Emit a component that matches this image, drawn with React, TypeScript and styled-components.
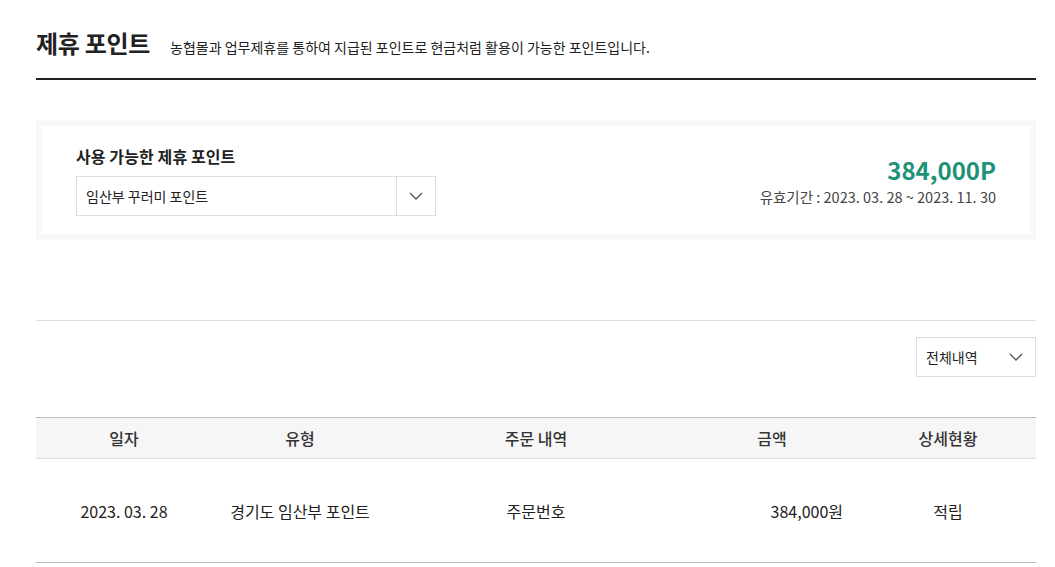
import React from "react";
import styled, { createGlobalStyle } from "styled-components";

const GlobalStyle = createGlobalStyle`
  body {
    margin: 0;
    background: #fff;
    font-family: "Noto Sans CJK KR", "Noto Sans", sans-serif;
    color: #222;
  }
`;

const Page = styled.div`
  width: 1000px;
  padding: 25px 0 0 36px;
`;

const TitleRow = styled.div`
  display: flex;
  align-items: baseline;
  gap: 20px;
  padding-bottom: 18px;
  border-bottom: 2px solid #222;
`;

const Title = styled.h2`
  margin: 0;
  font-size: 24px;
  font-weight: 700;
  color: #222;
  letter-spacing: -0.3px;
`;

const Desc = styled.p`
  margin: 0;
  font-size: 14px;
  color: #222;
`;

const PointBox = styled.div`
  margin-top: 40px;
  border: 6px solid #f8f8f8;
  height: 108px;
  padding: 0 34px;
  display: flex;
  align-items: center;
  justify-content: space-between;
`;

const PointLeft = styled.div`
  display: flex;
  flex-direction: column;
  gap: 8px;
  margin-top: -1px;
`;

const Label = styled.div`
  font-size: 16px;
  font-weight: 700;
  color: #222;
  letter-spacing: 0.1px;
`;

const Select = styled.div<{ $width: number }>`
  width: ${({ $width }) => $width}px;
  height: 40px;
  box-sizing: border-box;
  border: 1px solid #ddd;
  display: flex;
  align-items: center;
  background: #fff;
`;

const SelectText = styled.span`
  flex: 1;
  padding-left: 9px;
  font-size: 14px;
  color: #222;
`;

const SelectArrow = styled.span<{ $divided?: boolean }>`
  width: 38px;
  height: 100%;
  display: flex;
  align-items: center;
  justify-content: center;
  border-left: ${({ $divided }) => ($divided ? "1px solid #ddd" : "none")};
  color: #555;
`;

const PointRight = styled.div`
  text-align: right;
  margin-top: 2px;
`;

const Amount = styled.div`
  font-size: 24px;
  font-weight: 700;
  color: #1f9177;
  line-height: 30px;
`;

const Period = styled.div`
  font-size: 14.5px;
  color: #444;
  margin-top: 1px;
`;

const Divider = styled.div`
  margin-top: 80px;
  border-top: 1px solid #ddd;
`;

const FilterRow = styled.div`
  display: flex;
  justify-content: flex-end;
  padding-top: 16px;
`;

const Table = styled.table`
  margin-top: 40px;
  width: 1000px;
  border-collapse: collapse;
  table-layout: fixed;
  border-top: 1px solid #bbb;
  border-bottom: 1px solid #bbb;
`;

const Th = styled.th`
  height: 40px;
  padding: 0;
  background: #f6f6f6;
  border-bottom: 1px solid #ddd;
  font-size: 16px;
  font-weight: 500;
  color: #333;
  text-align: center;
`;

const Td = styled.td<{ $align?: string }>`
  height: 103px;
  padding: 0;
  font-size: 16px;
  color: #222;
  text-align: ${({ $align }) => $align || "center"};
  padding-right: ${({ $align }) => ($align === "right" ? "17px" : "0")};
`;

const Chevron = () => (
  <svg width="14" height="8" viewBox="0 0 14 8" fill="none">
    <path d="M1 1l6 6 6-6" stroke="#555" strokeWidth="1.3" />
  </svg>
);

export default function App() {
  return (
    <>
      <GlobalStyle />
      <Page>
        <TitleRow>
          <Title>제휴 포인트</Title>
          <Desc>농협몰과 업무제휴를 통하여 지급된 포인트로 현금처럼 활용이 가능한 포인트입니다.</Desc>
        </TitleRow>

        <PointBox>
          <PointLeft>
            <Label>사용 가능한 제휴 포인트</Label>
            <Select $width={360}>
              <SelectText>임산부 꾸러미 포인트</SelectText>
              <SelectArrow $divided>
                <Chevron />
              </SelectArrow>
            </Select>
          </PointLeft>
          <PointRight>
            <Amount>384,000P</Amount>
            <Period>유효기간 : 2023. 03. 28 ~ 2023. 11. 30</Period>
          </PointRight>
        </PointBox>

        <Divider />
        <FilterRow>
          <Select $width={120}>
            <SelectText>전체내역</SelectText>
            <SelectArrow>
              <Chevron />
            </SelectArrow>
          </Select>
        </FilterRow>

        <Table>
          <colgroup>
            <col style={{ width: 176 }} />
            <col style={{ width: 176 }} />
            <col style={{ width: 296 }} />
            <col style={{ width: 176 }} />
            <col style={{ width: 176 }} />
          </colgroup>
          <thead>
            <tr>
              <Th>일자</Th>
              <Th>유형</Th>
              <Th>주문 내역</Th>
              <Th>금액</Th>
              <Th>상세현황</Th>
            </tr>
          </thead>
          <tbody>
            <tr>
              <Td>2023. 03. 28</Td>
              <Td>경기도 임산부 포인트</Td>
              <Td>주문번호</Td>
              <Td $align="right">384,000원</Td>
              <Td>적립</Td>
            </tr>
          </tbody>
        </Table>
      </Page>
    </>
  );
}
